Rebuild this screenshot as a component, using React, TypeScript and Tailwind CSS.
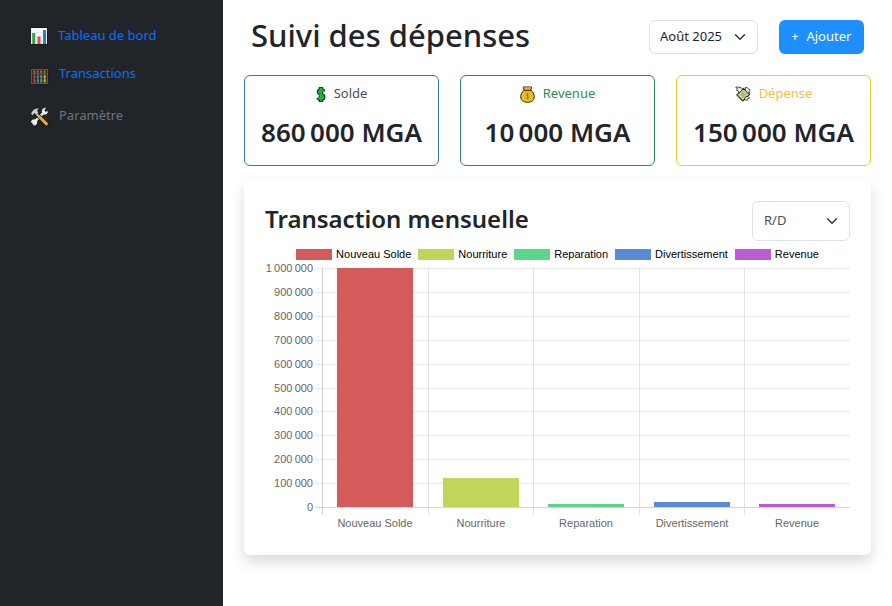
import type { ReactNode } from "react";

function ChartIcon() {
  return (
    <svg viewBox="0 0 18 18" className="size-[18px]" aria-hidden="true">
      <rect x="0.5" y="0.5" width="17" height="17" fill="#f6f6f6" stroke="#15171a" />
      <path d="M1 5.5h16M1 9.5h16M1 13.5h16" stroke="#dfe3e6" strokeWidth="0.6" />
      <rect x="2.2" y="6" width="3" height="11" fill="#2fa84a" />
      <rect x="7.5" y="9.5" width="3" height="7.5" fill="#e8483f" />
      <rect x="13" y="3" width="3" height="14" fill="#1f7fd0" />
    </svg>
  );
}

function AbacusIcon() {
  const rods = [
    { x: 4, color: "#d8322c" },
    { x: 7.4, color: "#2f86d6" },
    { x: 10.8, color: "#35ad4b" },
    { x: 14.2, color: "#e0a92a" },
  ];
  return (
    <svg viewBox="0 0 19 17" className="mt-1 h-[17px] w-[19px]" aria-hidden="true">
      <rect x="0.5" y="0.5" width="18" height="16" fill="#0f1012" />
      <rect x="1.5" y="1.5" width="16" height="14" fill="#2a2320" stroke="#8a4a2c" strokeWidth="1.2" />
      <path d="M1.5 5.8h16" stroke="#8a4a2c" />
      {rods.map((r) => (
        <g key={r.color}>
          <path d={`M${r.x + 0.4} 2v13`} stroke="#8d8d8d" strokeWidth="0.6" />
          <rect x={r.x - 0.6} y="3" width="2" height="1.6" fill="#b8653f" />
          <rect x={r.x - 0.6} y="7.2" width="2.2" height="3.4" rx="0.8" fill={r.color} />
          <rect x={r.x - 0.6} y="11" width="2.2" height="3.6" rx="0.8" fill={r.color} />
        </g>
      ))}
    </svg>
  );
}

function ToolsIcon() {
  return (
    <svg viewBox="0 0 18 18" className="size-[19px]" aria-hidden="true">
      <path d="M3.2 15.2 13.4 4.8" stroke="#101113" strokeWidth="4" strokeLinecap="round" />
      <path d="M3.2 15.2 13.4 4.8" stroke="#e2e5e7" strokeWidth="2.5" strokeLinecap="round" />
      <path d="M11.600 5.800a3.400 3.400 0 0 1 3.600-5l-1.600 2.200.9 1.500 2.600-.5a3.400 3.400 0 0 1-4.300 3.200z" fill="#eef0f1" />
      <path d="M5.400 12A3.200 3.200 0 0 0 .8 15l2-.8 1.200 1.100-1.100 2.100a3.200 3.200 0 0 0 3.800-4.100z" fill="#eef0f1" />
      <path d="M6 6.4 15.6 16" stroke="#101113" strokeWidth="4" strokeLinecap="round" />
      <path d="m6 6.4 3.2 3.2" stroke="#ced2d4" strokeWidth="2" />
      <path d="m9.2 9.6 6.4 6.4" stroke="#f0a62b" strokeWidth="2.8" strokeLinecap="round" />
      <path d="M.7 6.400 2.200 4C3.500 2 5.600 .8 8.800 1.300L6.900 3.300l1.100 2.200-2.200 2-1.800-1.500-1.500 2z" fill="#d0d3d5" stroke="#101113" strokeWidth="0.4" />
    </svg>
  );
}

function DollarIcon() {
  return (
    <svg viewBox="0 0 10 17" className="h-[17px] w-[10px]" aria-hidden="true">
      <g fill="none">
        <path d="M7.200 5.400C7 3.800 3 3.400 3 6c0 2.500 4.200 2.200 4.200 4.900 0 2.500-4.200 2.500-4.600.6M5 1v15" stroke="#10381a" strokeWidth="4.400" />
        <path d="M7.200 5.400C7 3.800 3 3.400 3 6c0 2.500 4.200 2.200 4.200 4.900 0 2.500-4.200 2.500-4.600.6M5 1.800v13.400" stroke="#22b33a" strokeWidth="2.200" />
      </g>
    </svg>
  );
}

function MoneyBagIcon() {
  return (
    <svg viewBox="0 0 15 17" className="h-[17px] w-[15px]" aria-hidden="true">
      <path d="M3.200 1h8.600l-1 3.200c2 1.500 3.500 4 3.500 6.600 0 3.700-3 5.500-6.800 5.500S.7 14.500.7 10.800c0-2.600 1.500-5.100 3.500-6.600z" fill="#ecbd1c" stroke="#3b2c10" />
      <path d="M4 4.400h7" stroke="#7a3d16" strokeWidth="1.400" />
      <path d="M3.800 1.800h7.400" stroke="#e0a030" strokeWidth="1" />
      <path d="M8.800 8.700c-.4-1-2.500-.9-2.500.3s2.600 1 2.600 2.400-2.500 1.400-2.800.2M7.500 7v6.200" fill="none" stroke="#6f8a1c" strokeWidth="0.900" />
    </svg>
  );
}

function FlyingMoneyIcon() {
  return (
    <svg viewBox="0 0 16 16" className="size-4" aria-hidden="true">
      <path d="m1.800 8.800 6.700-6.400 6 6-6.700 6.600z" fill="#c9da92" stroke="#2d3423" strokeWidth="1.100" strokeLinejoin="round" />
      <path d="m3.600 10.600 7-6.600M5.900 12.900l6.900-6.600" stroke="#94a965" strokeWidth="0.800" />
      <circle cx="8.200" cy="8.600" r="1.700" fill="#9dbb62" />
      <path d="M.8 1.200c2.400-.4 5.400.1 7 1.800L5.600 5.600 3.800 7.200C4 5.400 3.200 4.500 1.400 4.200l1.200-1z" fill="#e9ecee" stroke="#2a2c2e" strokeWidth="0.900" strokeLinejoin="round" />
      <path d="M10.300 1.500c1.700-.4 2.900.3 3.200 1.500l1.500.8-.8 1.400.8 2.100-2.200-.6-2.200-2.100zM10 11l3-.6 1.500 1.700-1.800.5-.6 1.900-2.300-.8z" fill="#e9ecee" stroke="#2a2c2e" strokeWidth="0.800" strokeLinejoin="round" />
    </svg>
  );
}

function Chevron() {
  return (
    <svg viewBox="0 0 16 16" className="pointer-events-none absolute top-1/2 right-3 size-3 -translate-y-1/2" aria-hidden="true">
      <path d="m2 5 6 6 6-6" fill="none" stroke="#343a40" strokeWidth="2" strokeLinecap="round" strokeLinejoin="round" />
    </svg>
  );
}

type StatProps = { icon: ReactNode; label: string; value: string; border: string; color: string };

function StatCard({ icon, label, value, border, color }: StatProps) {
  return (
    <section className={`flex h-[91px] flex-1 flex-col items-center rounded-md border bg-white pt-2 ${border}`}>
      <div className="flex h-5 items-center gap-2">
        {icon}
        <h2 className={`text-[13px] ${color}`}>{label}</h2>
      </div>
      <p className="mt-2.5 text-[26px] leading-9 font-semibold whitespace-nowrap">{value}</p>
    </section>
  );
}

const series = [
  { name: "Nouveau Solde", value: 1000000, fill: "#d55b5b", swatch: "bg-[#d55b5b]" },
  { name: "Nourriture", value: 120000, fill: "#bfd65b", swatch: "bg-[#bfd65b]" },
  { name: "Reparation", value: 10000, fill: "#5bd68b", swatch: "bg-[#5bd68b]" },
  { name: "Divertissement", value: 20000, fill: "#5b8bd6", swatch: "bg-[#5b8bd6]" },
  { name: "Revenue", value: 10000, fill: "#bb5bd6", swatch: "bg-[#bb5bd6]" },
];

const MAX = 1000000;
const LEFT = 57;
const RIGHT = 585;
const TOP = 7;
const BASE = 246;
const STEP = (RIGHT - LEFT) / series.length;
const BAR = 76;

const formatTick = (n: number) => String(n).replace(/\B(?=(\d{3})+$)/g, "\u202f");

function BarChart() {
  const ticks = Array.from({ length: 11 }, (_, i) => i * 100000);
  return (
    <svg viewBox="0 0 585 273" className="block w-full font-['Liberation_Sans',Arial,sans-serif] text-[11px]" role="img" aria-label="Transaction mensuelle">
      {ticks.map((t) => {
        const y = Math.round(BASE - (t / MAX) * (BASE - TOP)) + 0.5;
        return (
          <g key={t}>
            <path d={`M${LEFT - 7} ${y}H${RIGHT}`} stroke={t === 0 ? "#d4d4d4" : "#e8e8e8"} />
            <text x={LEFT - 9} y={y + 3} textAnchor="end" fill="#666">
              {formatTick(t)}
            </text>
          </g>
        );
      })}
      {series.map((s, i) => {
        const x = Math.round(LEFT + i * STEP);
        const h = Math.max(3, Math.round((s.value / MAX) * (BASE - TOP)));
        const mid = Math.round(x + STEP / 2);
        return (
          <g key={s.name}>
            <path d={`M${x + 0.5} ${TOP}V${BASE + 8}`} stroke={i === 0 ? "#cfcfcf" : "#e2e2e2"} />
            <rect x={mid - BAR / 2} y={BASE - h} width={BAR} height={h} fill={s.fill} />
            <text x={mid} y={BASE + 20} textAnchor="middle" fill="#666">
              {s.name}
            </text>
          </g>
        );
      })}
    </svg>
  );
}

export default function App() {
  return (
    <div className="flex min-h-screen bg-white font-['Segoe_UI','Noto_Sans',sans-serif] text-[#212529]">
      <aside className="w-1/4 shrink-0 bg-[#212529] pt-6 pl-[30px]">
        <nav className="flex flex-col text-[13px]">
          <a href="#tableau" className="flex h-6 items-center gap-2.5 text-[#0d6efd]">
            <ChartIcon />
            Tableau de bord
          </a>
          <a href="#transactions" className="mt-3.5 flex h-6 items-center gap-2.5 text-[#0d6efd]">
            <AbacusIcon />
            Transactions
          </a>
          <a href="#parametre" className="mt-[18px] flex h-6 items-center gap-2.5 text-[#6c757d]">
            <ToolsIcon />
            Paramètre
          </a>
        </nav>
      </aside>

      <main className="min-w-0 flex-1 px-[21px] pt-4">
        <header className="flex items-end px-[7px]">
          <h1 className="flex-1 text-[31px] leading-[38px] font-medium whitespace-nowrap">Suivi des dépenses</h1>
          <div className="relative">
            <select aria-label="Mois" className="block h-[34px] w-[109px] appearance-none rounded-md border border-[#dee2e6] bg-white pl-2.5 text-[13px]">
              <option>Août 2025</option>
            </select>
            <Chevron />
          </div>
          <button type="button" className="ml-[21px] flex h-[34px] w-[85px] items-center justify-center gap-2 rounded-md bg-[#1e8fff] text-[13px] text-white">
            <span className="text-xs">+</span>
            Ajouter
          </button>
        </header>

        <div className="mt-[21px] flex gap-[21px]">
          <StatCard icon={<DollarIcon />} label="Solde" value={"860\u202f000 MGA"} border="border-[#337ab7]" color="text-[#495057]" />
          <StatCard icon={<MoneyBagIcon />} label="Revenue" value={"10\u202f000 MGA"} border="border-[#2e8b57]" color="text-[#2e8b57]" />
          <StatCard icon={<FlyingMoneyIcon />} label="Dépense" value={"150\u202f000 MGA"} border="border-[#e9c92f]" color="text-[#f0c040]" />
        </div>

        <section className="mt-[14px] rounded-md bg-white p-[21px] shadow-[0_7px_14px_rgba(0,0,0,0.15)]">
          <div className="flex h-10 items-start justify-between">
            <h2 className="text-[24px] leading-9 font-semibold">Transaction mensuelle</h2>
            <div className="relative">
              <select aria-label="Type" className="block h-10 w-[98px] appearance-none rounded-md border border-[#dee2e6] bg-white pl-[11px] text-[13px] text-[#495057]">
                <option>R/D</option>
              </select>
              <Chevron />
            </div>
          </div>
          <ul className="mt-1.5 flex h-[14px] justify-center gap-[7px] font-['Liberation_Sans',Arial,sans-serif] text-[11px] leading-[14px] text-black">
            {series.map((s) => (
              <li key={s.name} className="flex items-center gap-1 whitespace-nowrap">
                <span className={`h-[11px] w-9 ${s.swatch}`} />
                {s.name}
              </li>
            ))}
          </ul>
          <BarChart />
        </section>
      </main>
    </div>
  );
}
